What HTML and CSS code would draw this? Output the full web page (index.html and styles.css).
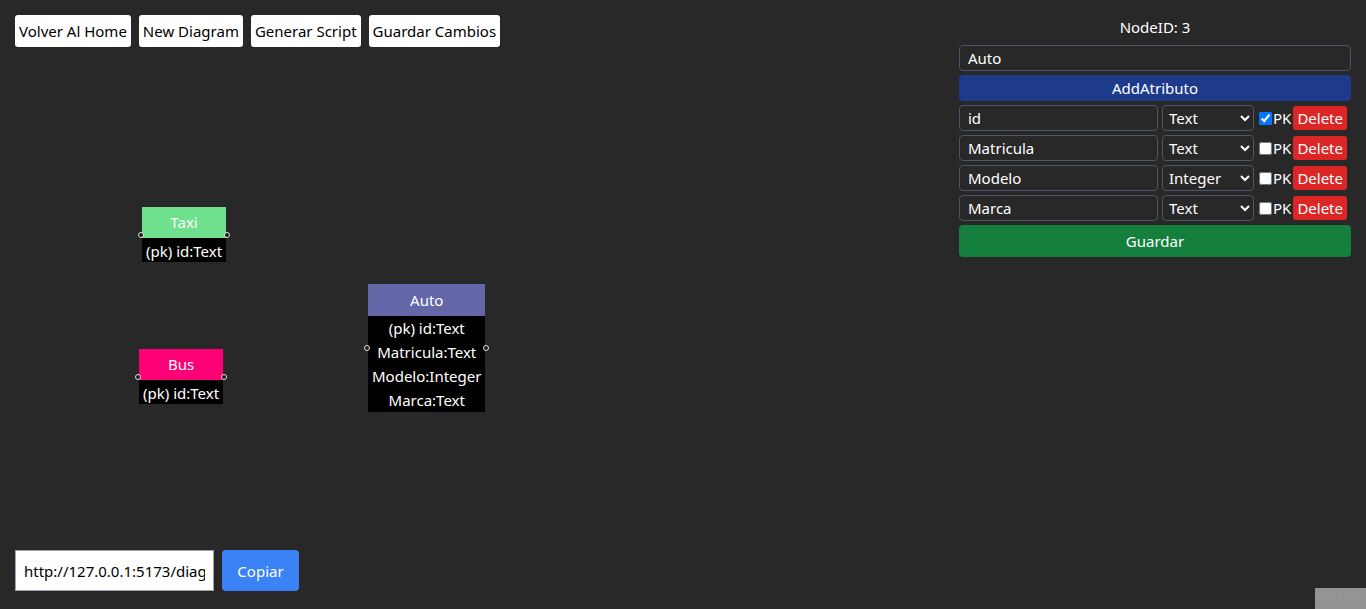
FILE: index.html
```html
<!DOCTYPE html>
<html lang="es">
<head>
<meta charset="utf-8">
<title>Diagram</title>
<link rel="stylesheet" href="styles.css">
</head>
<body>
<div class="app">
  <div class="left">
    <div class="toolbar">
      <button class="tbtn">Volver Al Home</button>
      <button class="tbtn">New Diagram</button>
      <button class="tbtn">Generar Script</button>
      <button class="tbtn">Guardar Cambios</button>
    </div>
    <div class="canvas">
      <div class="node node-taxi">
        <div class="node-head">Taxi</div>
        <div class="node-body"><div>(pk) id:Text</div></div>
        <span class="handle handle-l"></span><span class="handle handle-r"></span>
      </div>
      <div class="node node-bus">
        <div class="node-head">Bus</div>
        <div class="node-body"><div>(pk) id:Text</div></div>
        <span class="handle handle-l"></span><span class="handle handle-r"></span>
      </div>
      <div class="node node-auto">
        <div class="node-head">Auto</div>
        <div class="node-body">
          <div>(pk) id:Text</div>
          <div>Matricula:Text</div>
          <div>Modelo:Integer</div>
          <div>Marca:Text</div>
        </div>
        <span class="handle handle-l"></span><span class="handle handle-r"></span>
      </div>
    </div>
    <div class="share">
      <input class="share-input" type="text" value="http://127.0.0.1:5173/diagram/3" readonly>
      <button class="copy">Copiar</button>
    </div>
  </div>
  <div class="panel">
    <div class="nodeid">NodeID: 3</div>
    <input class="field full" type="text" value="Auto">
    <button class="add">AddAtributo</button>
    <div class="row">
      <input class="field name" type="text" value="id">
      <select class="sel"><option selected>Text</option><option>Integer</option></select>
      <label class="pk"><input type="checkbox" checked>PK</label>
      <button class="del">Delete</button>
    </div>
    <div class="row">
      <input class="field name" type="text" value="Matricula">
      <select class="sel"><option selected>Text</option><option>Integer</option></select>
      <label class="pk"><input type="checkbox">PK</label>
      <button class="del">Delete</button>
    </div>
    <div class="row">
      <input class="field name" type="text" value="Modelo">
      <select class="sel"><option>Text</option><option selected>Integer</option></select>
      <label class="pk"><input type="checkbox">PK</label>
      <button class="del">Delete</button>
    </div>
    <div class="row">
      <input class="field name" type="text" value="Marca">
      <select class="sel"><option selected>Text</option><option>Integer</option></select>
      <label class="pk"><input type="checkbox">PK</label>
      <button class="del">Delete</button>
    </div>
    <button class="save">Guardar</button>
  </div>
  <div class="attribution">React Flow</div>
</div>
</body>
</html>
```
FILE: styles.css
```css
* { box-sizing: border-box; }
html, body { margin: 0; padding: 0; }
body {
  background: #282828;
  color: #fff;
  font-family: "Noto Sans", "Open Sans", sans-serif;
  font-size: 15px;
}
button, input, select { font-family: inherit; font-size: 15px; }
.app {
  position: relative;
  display: flex;
  height: 609px;
  overflow: hidden;
}
.left {
  flex: 1;
  display: flex;
  flex-direction: column;
  padding: 15px 15px 18px 15px;
}
.toolbar { display: flex; gap: 8px; height: 32px; }
.tbtn {
  background: #fff;
  color: #000;
  border: 0;
  border-radius: 3px;
  padding: 0 4px;
  height: 32px;
  line-height: 32px;
}
.canvas { position: relative; flex: 1; }
.node {
  position: absolute;
  display: flex;
  flex-direction: column;
  background: #000;
  color: #fff;
  text-align: center;
}
.node-head {
  height: 31px;
  line-height: 31px;
  padding: 0 4px;
}
.node-body { padding: 0 4px; }
.node-body div { height: 24px; line-height: 26px; white-space: nowrap; }
.node-taxi { left: 127px; top: 160px; }
.node-taxi .node-head { background: #6fe08b; }
.node-bus { left: 124px; top: 302px; }
.node-bus .node-head { background: #ff0076; }
.node-auto { left: 353px; top: 237px; }
.node-auto .node-head { background: #6466a7; height: 32px; line-height: 32px; }
.node-auto .node-body div { line-height: 24px; }
.handle {
  position: absolute;
  top: 50%;
  width: 6px;
  height: 6px;
  margin-top: -3px;
  border-radius: 50%;
  background: #1a1a1a;
  border: 1px solid #e0e0e0;
}
.handle-l { left: -4px; }
.handle-r { right: -4px; }
.share { display: flex; gap: 8px; height: 41px; }
.share-input {
  width: 199px;
  height: 41px;
  border: 1px solid #9ca3af;
  background: #fff;
  color: #000;
  padding: 0 8px;
  outline: none;
}
.copy {
  width: 77px;
  height: 41px;
  border: 0;
  border-radius: 4px;
  background: #3b82f6;
  color: #fff;
}
.panel {
  width: 392px;
  margin: 14px 15px 0 0;
  display: flex;
  flex-direction: column;
  gap: 4px;
}
.nodeid { height: 27px; line-height: 26px; text-align: center; }
.field {
  height: 26px;
  background: transparent;
  border: 1px solid #4b5563;
  border-radius: 4px;
  color: #fff;
  padding: 0 8px;
  outline: none;
}
.full { width: 392px; }
.add {
  height: 26px;
  border: 0;
  border-radius: 4px;
  background: #1e3a8a;
  color: #fff;
}
.row { display: flex; align-items: center; height: 26px; }
.name { width: 199px; }
.sel {
  width: 92px;
  height: 26px;
  margin-left: 4px;
  background: #282828;
  color: #fff;
  border: 1px solid #4b5563;
  border-radius: 4px;
  padding: 0 2px;
}
.pk { display: flex; align-items: center; margin-left: 1px; }
.pk input { width: 13px; height: 13px; margin: 0 1px 0 4px; }
.del {
  height: 24px;
  border: 0;
  border-radius: 3px;
  background: #dc2626;
  color: #fff;
  padding: 0 4px;
  margin-left: 2px;
}
.save {
  height: 32px;
  border: 0;
  border-radius: 4px;
  background: #15803d;
  color: #fff;
}
.attribution {
  position: absolute;
  right: 0;
  bottom: 0;
  padding: 2px 3px;
  font-size: 9px;
  line-height: 17px;
  background: rgba(255, 255, 255, 0.5);
  color: #999;
  font-family: "Liberation Sans", sans-serif;
}
```
